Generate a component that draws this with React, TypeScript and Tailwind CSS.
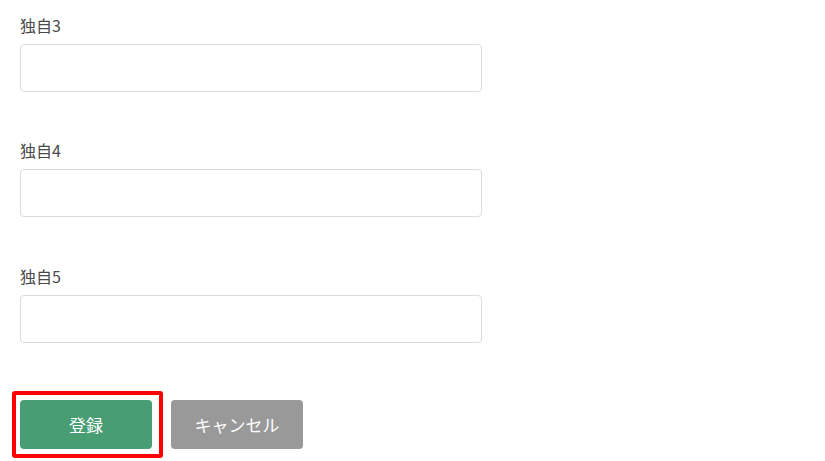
import React from "react";

const Field = ({ label, extra = "" }: { label: string; extra?: string }) => (
  <div className={"flex flex-col " + extra}>
    <div className="h-6 leading-6 text-[16px] text-[#4a4a4a]">{label}</div>
    <div className="mt-[7px] h-12 w-[462px] rounded-[4px] border border-[#dcdce0] bg-white" />
  </div>
);

export default function App() {
  return (
    <div
      className="min-h-[461px] w-[825px] bg-white pl-5 pt-[13px]"
      style={{ fontFamily: '"Noto Sans CJK JP", "Noto Sans", sans-serif' }}
    >
      <div className="flex flex-col gap-[46px]">
        <Field label="独自3" />
        <Field label="独自4" />
        <Field label="独自5" extra="mt-px" />
      </div>
      <div className="mt-[57px] flex gap-[19px]">
        <div className="relative">
          <button className="flex h-[49px] w-[132px] items-center justify-center rounded-[4px] bg-[#489d73] text-[17px] text-white">
            登録
          </button>
          <div className="pointer-events-none absolute left-[-8px] top-[-9px] h-[67px] w-[151px] rounded-[3px] border-4 border-[#ff0000]" />
        </div>
        <button className="flex h-[49px] w-[132px] items-center justify-center rounded-[4px] bg-[#999999] text-[17px] text-white">
          キャンセル
        </button>
      </div>
    </div>
  );
}
